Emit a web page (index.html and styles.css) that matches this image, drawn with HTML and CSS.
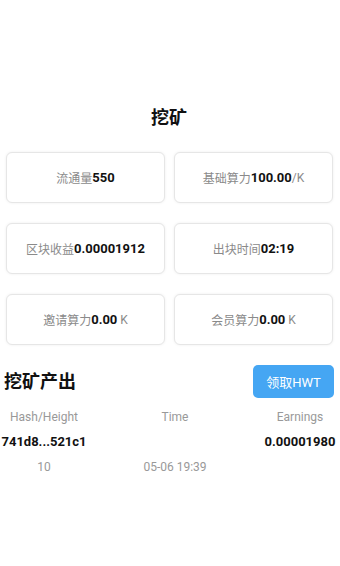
FILE: index.html
```html
<!DOCTYPE html>
<html lang="zh">
<head>
<meta charset="utf-8">
<title>挖矿</title>
<link rel="stylesheet" href="styles.css">
</head>
<body>
<div class="page">
  <h1 class="title">挖矿</h1>
  <div class="cards">
    <div class="card"><span class="label">流通量</span><span class="value">550</span></div>
    <div class="card"><span class="label">基础算力</span><span class="value">100.00</span><span class="unit">/K</span></div>
    <div class="card"><span class="label">区块收益</span><span class="value">0.00001912</span></div>
    <div class="card"><span class="label">出块时间</span><span class="value">02:19</span></div>
    <div class="card"><span class="label">邀请算力</span><span class="value">0.00</span><span class="unit">&nbsp;K</span></div>
    <div class="card"><span class="label">会员算力</span><span class="value">0.00</span><span class="unit">&nbsp;K</span></div>
  </div>
  <div class="section-head">
    <h2 class="section-title">挖矿产出</h2>
    <button class="claim">领取HWT</button>
  </div>
  <div class="table">
    <div class="row head"><span>Hash/Height</span><span>Time</span><span>Earnings</span></div>
    <div class="row strong"><span>741d8...521c1</span><span></span><span>0.00001980</span></div>
    <div class="row sub"><span>10</span><span>05-06 19:39</span><span></span></div>
  </div>
</div>
</body>
</html>
```

FILE: styles.css
```css
* { box-sizing: border-box; }
html, body {
  margin: 0;
  padding: 0;
  background: #fff;
}
body {
  font-family: Roboto, "Noto Sans CJK SC", sans-serif;
  color: #111;
}
.page {
  width: 340px;
  padding: 106px 6px 0 4px;
}
.title {
  margin: 0;
  font-size: 18px;
  line-height: 24px;
  font-weight: 700;
  text-align: center;
  color: #111;
}
.cards {
  margin: 22px 1px 0 2px;
  display: grid;
  grid-template-columns: 1fr 1fr;
  grid-auto-rows: 51px;
  column-gap: 9px;
  row-gap: 20px;
}
.card {
  display: flex;
  align-items: center;
  justify-content: center;
  background: #fff;
  border: 1px solid #e6e6e6;
  border-radius: 6px;
  box-shadow: 0 0 3px rgba(0, 0, 0, 0.07);
  white-space: nowrap;
}
.label {
  font-size: 12px;
  color: #8a8a8a;
}
.value {
  font-size: 13px;
  font-weight: 700;
  color: #111;
}
.unit {
  font-size: 12px;
  color: #8a8a8a;
}
.section-head {
  margin-top: 20px;
  display: flex;
  align-items: center;
  justify-content: space-between;
}
.section-title {
  margin: 0;
  font-size: 18px;
  line-height: 24px;
  font-weight: 700;
  color: #111;
}
.claim {
  width: 81px;
  height: 33px;
  border: none;
  border-radius: 5px;
  background: #45a6f3;
  color: #fff;
  font-family: Roboto, "Noto Sans CJK SC", sans-serif;
  font-size: 13px;
  padding: 0;
}
.table {
  margin-top: 6px;
}
.row {
  display: grid;
  grid-template-columns: 80px 1fr 68px;
  height: 25px;
  align-items: center;
  justify-items: center;
  white-space: nowrap;
}
.row.head {
  font-size: 12px;
  color: #999;
}
.row.strong {
  font-size: 13px;
  font-weight: 700;
  color: #111;
}
.row.sub {
  font-size: 12px;
  color: #999;
}
```
